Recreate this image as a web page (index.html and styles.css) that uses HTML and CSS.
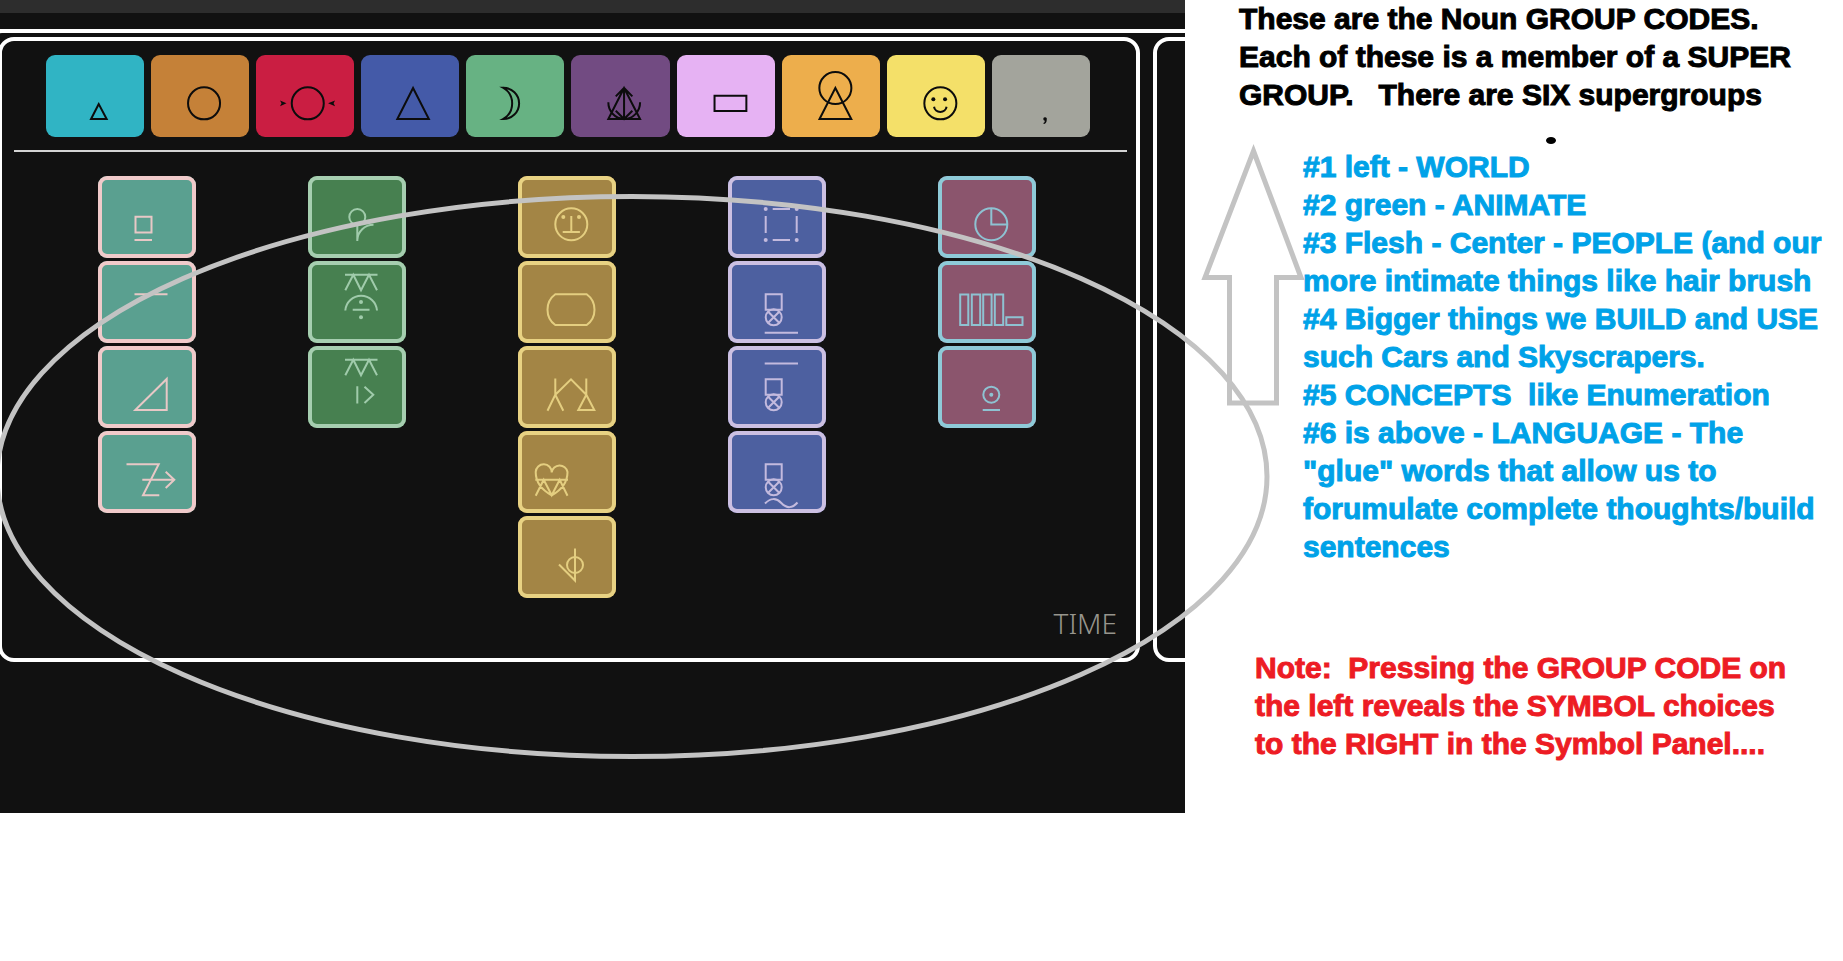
FILE: index.html
```html
<!DOCTYPE html>
<html lang="en">
<head>
<meta charset="utf-8">
<title>Noun group codes</title>
<link rel="stylesheet" href="styles.css">
</head>
<body>
<svg class="defs" aria-hidden="true">
  <symbol id="creature" viewBox="0 0 98 82"><path d="M37 13.7H69.5M37.3 29.3L45.3 13.7L53 29.3L61 13.7L69 29.3"/></symbol>
  <symbol id="machine" viewBox="0 0 98 82"><path d="M37.7 33.3H53.7V48.7H37.7ZM40.2 50.8L51.2 61.8M51.2 50.8L40.2 61.8"/><circle cx="45.7" cy="56.3" r="8"/></symbol>
</svg>
<div class="stage">
  <main class="board">
    <div class="topbar"></div>
    <div class="frame">
      <section class="panel">
        <div class="language">
          <button class="tile cyan" aria-label="Small triangle"><svg viewBox="0 0 98 82"><path d="M52.7 49L45 64H60.6Z"/></svg></button>
          <button class="tile orange" aria-label="Circle"><svg viewBox="0 0 98 82"><circle cx="53" cy="48.3" r="16"/></svg></button>
          <button class="tile red" aria-label="Pressed circle"><svg viewBox="0 0 98 82"><circle cx="51.7" cy="48.3" r="16"/><path class="solid" d="M24 45.5L30.5 48.3L24 51.1L25.5 48.3ZM79 45.5L72 48.3L79 51.1L77.5 48.3Z"/></svg></button>
          <button class="tile blue" aria-label="Triangle"><svg viewBox="0 0 98 82"><path d="M52 33L36.3 64H67.8Z"/></svg></button>
          <button class="tile green" aria-label="Crescent"><svg viewBox="0 0 98 82"><path d="M37 32.7A16 15.6 0 0 1 37 64A18 18 0 0 0 37 32.7Z"/></svg></button>
          <button class="tile purple" aria-label="Arrow triangle"><svg viewBox="0 0 98 82"><path d="M53 33L37.3 64H69Z M53 33V64M44.7 41.3L53 33L61.3 41.3M44.7 55.7L53 64L61.3 55.7M37.3 47.3A16 16.5 0 0 0 53 64A16 16.5 0 0 0 69 47.3"/></svg></button>
          <button class="tile pink" aria-label="Rectangle"><svg viewBox="0 0 98 82"><path d="M37.5 40.7H69.3V56H37.5Z"/></svg></button>
          <button class="tile amber" aria-label="Person"><svg viewBox="0 0 98 82"><circle cx="53.3" cy="33" r="16"/><path d="M53.3 33L37.5 64H69.2Z"/></svg></button>
          <button class="tile yellow" aria-label="Smile"><svg viewBox="0 0 98 82"><circle cx="53.3" cy="48.3" r="16"/><circle class="solid" cx="46.3" cy="44.3" r="2"/><circle class="solid" cx="58" cy="44.3" r="2"/><path d="M47 51.7A6.3 6 0 0 0 59.5 51.7"/></svg></button>
          <button class="tile grey" aria-label="Comma"><svg viewBox="0 0 98 82"><path class="solid" d="M51.2 64A1.8 1.8 0 1 1 54.7 64.6Q54.6 68.6 51.6 69L51.4 68Q52.8 67.6 52.8 65.6Q51.4 65.6 51.2 64Z"/></svg></button>
        </div>
        <hr class="divider">
        <div class="groups">
          <div class="group world">
            <button class="tile" aria-label="World 1"><svg viewBox="0 0 98 82"><path d="M37.5 40.7H53.5V56.5H37.5ZM36.5 64H54"/></svg></button>
            <button class="tile" aria-label="World 2"><svg viewBox="0 0 98 82"><path d="M36.5 33.3H69.5"/></svg></button>
            <button class="tile" aria-label="World 3"><svg viewBox="0 0 98 82"><path d="M68.7 33V64H37.3Z"/></svg></button>
            <button class="tile" aria-label="World 4"><svg viewBox="0 0 98 82"><path d="M28.5 33.3H60.7L45 64.3H61.3M44.3 48.7H76.3M67.7 40.7L76.3 48.7L67.7 57"/></svg></button>
          </div>
          <div class="group animate">
            <button class="tile" aria-label="Animate 1"><svg viewBox="0 0 98 82"><circle cx="49.3" cy="41" r="8"/><path d="M49.3 49V65M49.3 64.3A16 16 0 0 1 65.5 48.7"/></svg></button>
            <button class="tile" aria-label="Animate 2"><svg viewBox="0 0 98 82"><use href="#creature"/><path d="M37.3 49.5A15.9 16 0 0 1 69 49.5M44.7 48.7H61.5"/><circle class="solid" cx="53" cy="41" r="2"/><circle class="solid" cx="53" cy="56.3" r="2"/></svg></button>
            <button class="tile" aria-label="Animate 3"><svg viewBox="0 0 98 82"><use href="#creature"/><path d="M49.3 40.3V57.5M56.5 40.7L65.3 48.7L56.5 57"/></svg></button>
          </div>
          <div class="group people">
            <button class="tile" aria-label="People 1"><svg viewBox="0 0 98 82"><circle cx="53.3" cy="48.3" r="16"/><path d="M53.3 40V56M44.7 56H61.9"/><circle class="solid" cx="45.3" cy="41" r="2"/><circle class="solid" cx="61" cy="41" r="2"/></svg></button>
            <button class="tile" aria-label="People 2"><svg viewBox="0 0 98 82"><path d="M37.3 33.3H68.7A19 19 0 0 1 68.7 64H37.3A19 19 0 0 1 37.3 33.3Z"/></svg></button>
            <button class="tile" aria-label="People 3"><svg viewBox="0 0 98 82"><path d="M37.3 32.5V48.7L29.5 64.7M37.3 48.7L45.3 64.7M37.3 48.7L53 33.3L68.3 48.7V32.5M68.3 48.7L60.3 64H76.3Z"/></svg></button>
            <button class="tile" aria-label="People 4"><svg viewBox="0 0 98 82"><path d="M33.7 41.5A8 8 0 0 0 17.7 41C17.7 52 24 59 33.7 64.3C43.4 59 49.5 52 49.5 41A8 8 0 0 0 33.7 41.5M17.3 48.7H50M17.7 64.7L25.7 48.7L33.7 64.3L41.7 48.7L49.5 64.7"/></svg></button>
            <button class="tile" aria-label="People 5"><svg viewBox="0 0 98 82"><circle cx="57" cy="49" r="8"/><path d="M57 32.5V64.5L41 48.5"/></svg></button>
          </div>
          <div class="group build">
            <button class="tile" aria-label="Build 1"><svg viewBox="0 0 98 82"><path d="M44.7 33H62M44.7 64H62M37.7 40V57M68.7 40V57"/><circle class="solid" cx="37.7" cy="33" r="2"/><circle class="solid" cx="68.7" cy="33" r="2"/><circle class="solid" cx="37.7" cy="64" r="2"/><circle class="solid" cx="68.7" cy="64" r="2"/></svg></button>
            <button class="tile" aria-label="Build 2"><svg viewBox="0 0 98 82"><use href="#machine"/><path d="M36.7 71.7H70"/></svg></button>
            <button class="tile" aria-label="Build 3"><svg viewBox="0 0 98 82"><use href="#machine"/><path d="M36.7 17.5H70"/></svg></button>
            <button class="tile" aria-label="Build 4"><svg viewBox="0 0 98 82"><use href="#machine"/><path d="M37 72.5Q45.5 64 53.3 72Q61.5 80.5 69.5 71.5"/></svg></button>
          </div>
          <div class="group concepts">
            <button class="tile" aria-label="Concept 1"><svg viewBox="0 0 98 82"><circle cx="53.3" cy="48.3" r="16"/><path d="M53.3 32.5V48.5H69.3"/></svg></button>
            <button class="tile" aria-label="Concept 2"><svg viewBox="0 0 98 82"><path d="M22.2 33.5H30.3V64H22.2ZM33.8 33.5H42.2V64H33.8ZM45.2 33.5H53.6V64H45.2ZM56.8 33.5H65.2V64H56.8ZM68.3 56.3H84.5V64H68.3Z"/></svg></button>
            <button class="tile" aria-label="Concept 3"><svg viewBox="0 0 98 82"><circle cx="53.3" cy="48.7" r="8"/><circle class="solid" cx="53.3" cy="48.7" r="2"/><path d="M44.7 64H62"/></svg></button>
          </div>
        </div>
        <p class="status">TIME</p>
      </section>
      <section class="panel"></section>
    </div>
  </main>
  <aside class="notes">
    <p class="intro">These are the Noun GROUP CODES.
Each of these is a member of a SUPER
GROUP.   There are SIX supergroups</p>
    <ul class="list">
      <li>#1 left - WORLD</li>
      <li>#2 green - ANIMATE</li>
      <li>#3 Flesh - Center - PEOPLE (and our
more intimate things like hair brush</li>
      <li>#4 Bigger things we BUILD and USE
such Cars and Skyscrapers.</li>
      <li>#5 CONCEPTS  like Enumeration</li>
      <li>#6 is above - LANGUAGE - The
"glue" words that allow us to
forumulate complete thoughts/build
sentences</li>
    </ul>
    <p class="warning">Note:  Pressing the GROUP CODE on
the left reveals the SYMBOL choices
to the RIGHT in the Symbol Panel....</p>
  </aside>
  <svg class="marks" viewBox="0 0 1843 813" aria-hidden="true">
    <ellipse cx="632" cy="476.5" rx="635" ry="280"/>
    <path d="M1253.5 151L1301 277.5H1276.5V403H1229.5V277.5H1205Z"/>
    <ellipse class="dot" cx="1551" cy="140.5" rx="5" ry="3.5"/>
  </svg>
</div>
</body>
</html>
```
FILE: styles.css
```css
* { box-sizing: border-box; }

body {
  margin: 0;
  background: #fff;
  overflow-x: hidden;
}

.defs {
  position: absolute;
  width: 0;
  height: 0;
}

.stage {
  position: relative;
  display: grid;
  grid-template-columns: minmax(0, 1185fr) minmax(0, 658fr);
}

/* Symbol board */

.board {
  background: #111;
  overflow: hidden;
}

.topbar {
  height: 13px;
  margin-bottom: 16px;
  background: #2d2d2d;
}

.frame {
  display: grid;
  grid-template-columns: minmax(0, 1fr) 48px;
  gap: 13px;
  margin: 0 -20px 0 -14px;
  padding: 4px 0 151px 8px;
  border: 4px solid #fff;
  border-bottom: 0;
  border-radius: 16px 0 0 0;
}

.panel {
  border: 4px solid #fff;
  border-radius: 16px;
}

.language {
  display: grid;
  grid-template-columns: repeat(10, minmax(0, 1fr));
  gap: 7px;
  padding: 14px 46px 0 44px;
}

.tile {
  display: block;
  width: 100%;
  padding: 0;
  border: 0;
  border-radius: 9px;
  color: #0c0c0c;
  cursor: pointer;
}

.tile svg {
  display: block;
  width: 100%;
  height: auto;
  fill: none;
  stroke: currentColor;
  stroke-width: 2;
}

.tile .solid {
  fill: currentColor;
  stroke: none;
}

.cyan { background: #30b4c4; }
.orange { background: #c58138; }
.red { background: #ca1e42; }
.blue { background: #445aa8; }
.green { background: #67b283; }
.purple { background: #724b82; }
.pink { background: #e6b2f3; }
.amber { background: #edae4c; }
.yellow { background: #f4e069; }
.grey { background: #a3a49c; }

.divider {
  height: 2px;
  margin: 13px 9px 24px 12px;
  border: 0;
  background: #d4d4d4;
}

.groups {
  display: grid;
  grid-template-columns: repeat(5, minmax(0, 1fr));
  gap: 112px;
  align-items: start;
  padding: 0 100px 0 96px;
}

.group {
  display: grid;
  gap: 3px;
}

.world .tile { background: #5aa090; color: #e8c8c6; box-shadow: inset 0 0 0 4px #f0caca; }
.animate .tile { background: #478050; color: #a0cbab; box-shadow: inset 0 0 0 4px #a6ceb0; }
.people .tile { background: #a38545; color: #e4ce80; box-shadow: inset 0 0 0 4px #e8d283; }
.build .tile { background: #4d60a0; color: #c3bade; box-shadow: inset 0 0 0 4px #ccc0e2; }
.concepts .tile { background: #8b556d; color: #8ec2d2; box-shadow: inset 0 0 0 4px #8ecad8; }

.status {
  margin: 7px 19px 17px;
  color: #97958d;
  font: 300 28px/36px "Noto Sans", sans-serif;
  text-align: right;
}

/* Annotations */

.notes {
  padding-left: 54px;
  font: bold 30px/38px "Liberation Sans", Arial, sans-serif;
  -webkit-text-stroke: 1px currentColor;
}

.intro,
.list li,
.warning {
  white-space: pre;
}

.intro {
  margin: 0;
  color: #000;
}

.list {
  margin: 34px 0 83px 64px;
  padding: 0;
  color: #00a2e8;
  list-style: none;
}

.warning {
  margin: 0 0 0 16px;
  color: #ed1c24;
}

.marks {
  position: absolute;
  top: 0;
  left: 0;
  width: 100%;
  height: auto;
  fill: none;
  stroke: #c3c3c3;
  stroke-width: 5;
  pointer-events: none;
}

.marks .dot {
  fill: #000;
  stroke: none;
}
```
